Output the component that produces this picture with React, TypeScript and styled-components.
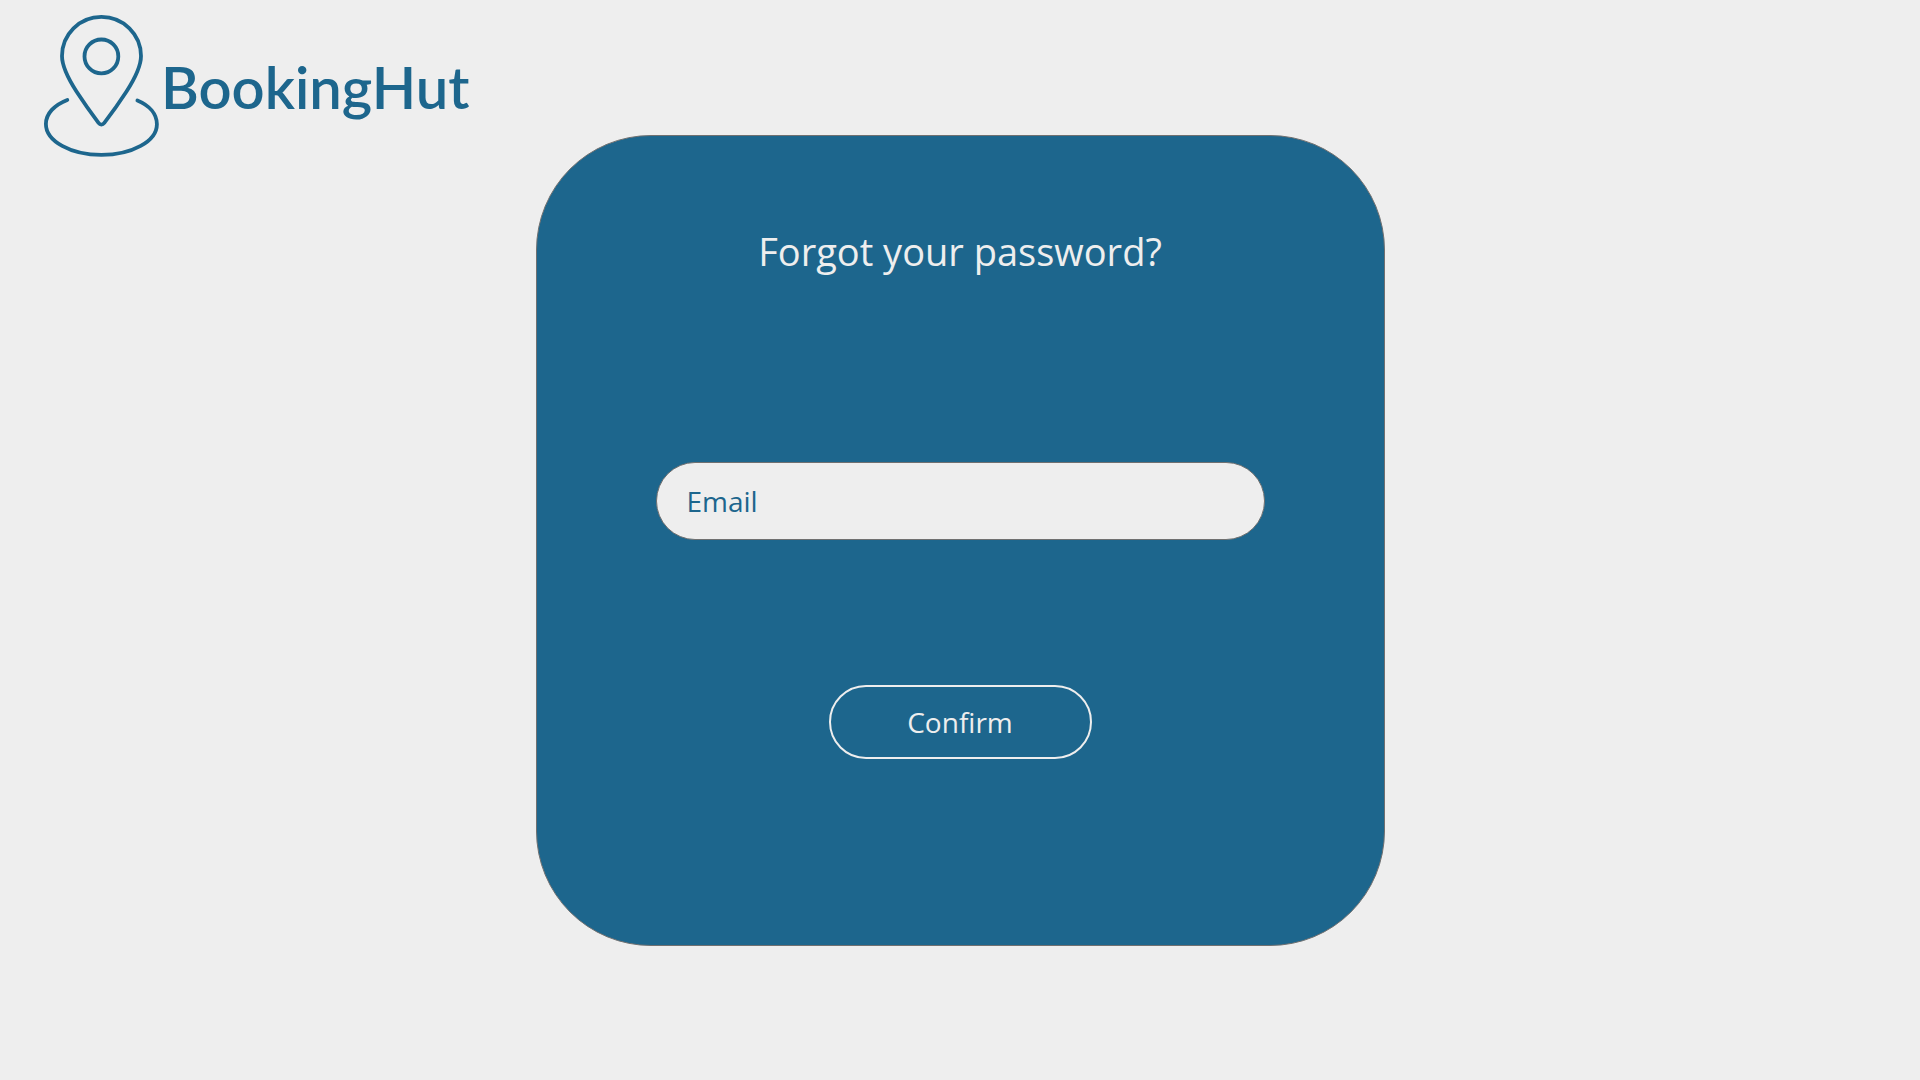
import React, { useState } from "react";
import styled, { createGlobalStyle } from "styled-components";

const blue = "#1d668d";
const paper = "#eeeeee";
const outline = "#707070";

const GlobalStyle = createGlobalStyle`
  *, *::before, *::after { box-sizing: border-box; }
  body {
    margin: 0;
    background: ${paper};
    font-family: "Open Sans", "Noto Sans", sans-serif;
  }
`;

const Page = styled.div`
  display: grid;
  grid-template-columns: 1fr minmax(auto, 849px) 1fr;
  align-items: start;
  min-height: 100vh;

  @media (max-width: 1700px) {
    grid-template-columns: minmax(0, 849px);
    justify-content: center;
  }
`;

const Brand = styled.a`
  display: flex;
  align-items: flex-start;
  gap: 2px;
  padding: 14px 0 0 43px;
  color: ${blue};
  text-decoration: none;
`;

const PinMark = styled.svg`
  flex: none;
  width: 116px;
  height: 144px;
  fill: none;
  stroke: currentColor;
  stroke-width: 3.8;
  stroke-linecap: round;
  stroke-linejoin: round;
`;

const BrandName = styled.span`
  padding-top: 36px;
  font-family: Lato, sans-serif;
  font-size: 58px;
  font-weight: 600;
  line-height: 74px;
`;

const Card = styled.form`
  display: flex;
  flex-direction: column;
  align-items: center;
  margin: 135px 0;
  padding: 87px 119px 186px;
  border: 1px solid ${outline};
  border-radius: 115px;
  background: ${blue};

  @media (max-width: 1700px) {
    margin: 40px 16px;
  }
`;

const Title = styled.h1`
  margin: 0;
  color: ${paper};
  font-size: 38px;
  font-weight: 400;
  line-height: 56px;
  text-align: center;
`;

const EmailField = styled.input`
  width: 100%;
  height: 78px;
  margin-top: 183px;
  padding: 0 30px;
  border: 1px solid ${outline};
  border-radius: 39px;
  background: ${paper};
  color: ${blue};
  font-family: inherit;
  font-size: 28px;

  &::placeholder {
    color: ${blue};
    opacity: 1;
  }
`;

const ConfirmButton = styled.button`
  width: 263px;
  max-width: 100%;
  height: 74px;
  margin-top: 145px;
  padding: 0 24px;
  border: 2px solid ${paper};
  border-radius: 37px;
  background: transparent;
  color: ${paper};
  font-family: inherit;
  font-size: 28px;
  font-variant-ligatures: none;
  cursor: pointer;
`;

function Logo() {
  return (
    <Brand href="#">
      <PinMark viewBox="43 14 116 144" aria-hidden="true">
        <path d="M101.4 16.9C79.5 16.9 62 34.3 62 56C62 66 67.5 77.5 76.5 91.5C83 101.5 91.5 113.5 98.5 122.8C100.2 125.1 102.6 125.1 104.3 122.8C111.5 113.5 120 101.5 126.5 91.5C135.5 77.5 141 66 141 56C141 34.3 123.3 16.9 101.4 16.9Z" />
        <circle cx="101.4" cy="56.4" r="16.9" />
        <path d="M67.3 99.9C54.5 104.8 45.9 113.6 45.9 124C45.9 141.2 70.7 154.9 101.4 154.9S156.9 141.2 156.9 124.2C156.9 114 149.5 105.4 137.4 100.4" />
      </PinMark>
      <BrandName>BookingHut</BrandName>
    </Brand>
  );
}

export default function App() {
  const [email, setEmail] = useState("");

  return (
    <>
      <GlobalStyle />
      <Page>
        <Logo />
        <Card onSubmit={(event: React.FormEvent) => event.preventDefault()}>
          <Title>Forgot your password?</Title>
          <EmailField
            type="email"
            name="email"
            aria-label="Email"
            placeholder="Email"
            value={email}
            onChange={(event) => setEmail(event.target.value)}
          />
          <ConfirmButton type="submit">Confirm</ConfirmButton>
        </Card>
      </Page>
    </>
  );
}
